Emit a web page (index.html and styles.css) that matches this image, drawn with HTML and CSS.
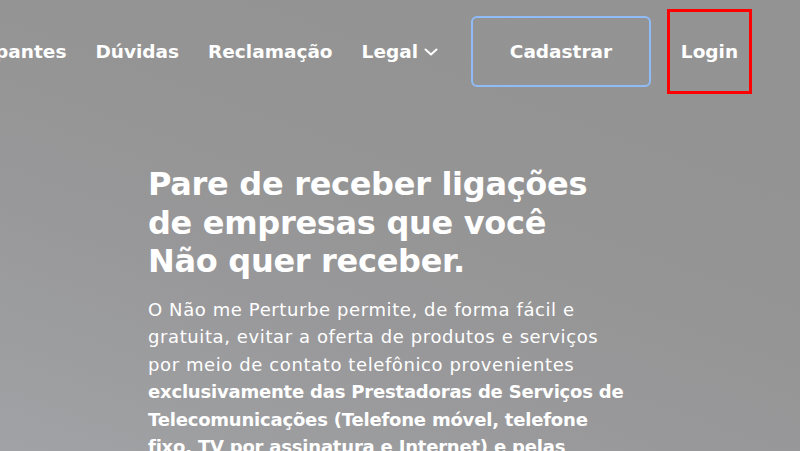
FILE: index.html
```html
<!DOCTYPE html>
<html lang="pt-BR">
<head>
    <meta charset="UTF-8">
    <meta name="viewport" content="width=device-width, initial-scale=1.0">
    <title>Não me Perturbe</title>
    <link rel="stylesheet" href="styles.css">
</head>
<body>
    <div class="page">
        <div class="header">
            <div class="menu">
                <a class="menuItem" href="#">Participantes</a>
                <a class="menuItem" href="#">Dúvidas</a>
                <a class="menuItem" href="#">Reclamação</a>
                <a class="menuItem" href="#">Legal
                    <svg class="chevron" width="14" height="10" viewBox="0 0 14 10"><path d="M1.5 2.5 L7 7.5 L12.5 2.5" fill="none" stroke="#fff" stroke-width="2" stroke-linecap="round" stroke-linejoin="round"/></svg>
                </a>
            </div>
            <a class="btnCadastrar" href="#">Cadastrar</a>
            <a class="btnLogin" href="#">Login</a>
        </div>
        <div class="hero">
            <h1 class="title">Pare de receber ligações<br>de empresas que você<br>Não quer receber.</h1>
            <p class="text">O Não me Perturbe permite, de forma fácil e<br>gratuita, evitar a oferta de produtos e serviços<br>por meio de contato telefônico provenientes<br><b>exclusivamente das Prestadoras de Serviços de<br>Telecomunicações (Telefone móvel, telefone<br>fixo, TV por assinatura e Internet) e pelas</b></p>
        </div>
    </div>
</body>
</html>
```

FILE: styles.css
```css
* {
    margin: 0;
    padding: 0;
    box-sizing: border-box;
    font-family: 'DejaVu Sans', Verdana, sans-serif;
}
html, body {
    height: 100%;
    overflow: hidden;
}
.page {
    height: 100vh;
    background: linear-gradient(20deg, #a1a2a5 0%, #98989a 35%, #949494 60%, #939393 100%);
    color: #fff;
}
.header {
    display: flex;
    justify-content: flex-end;
    align-items: center;
    height: 103px;
    padding-right: 48px;
}
.menu {
    display: flex;
    align-items: center;
    gap: 29px;
    margin-right: 33px;
    white-space: nowrap;
    flex-shrink: 0;
}
.menuItem {
    color: #fff;
    text-decoration: none;
    font-size: 18.5px;
    font-weight: 700;
    display: flex;
    align-items: center;
}
.chevron {
    margin-left: 6px;
}
.btnCadastrar {
    display: flex;
    align-items: center;
    justify-content: center;
    flex-shrink: 0;
    width: 180px;
    height: 71px;
    border: 2px solid #8fbcf7;
    border-radius: 6px;
    color: #fff;
    text-decoration: none;
    font-size: 18.5px;
    font-weight: 700;
    margin-right: 16px;
}
.btnLogin {
    display: flex;
    align-items: center;
    justify-content: center;
    flex-shrink: 0;
    width: 85px;
    height: 85px;
    border: 3px solid #ff0000;
    color: #fff;
    text-decoration: none;
    font-size: 18.5px;
    font-weight: 700;
}
.hero {
    width: 500px;
    margin-left: 148px;
    margin-top: 62px;
}
.title {
    font-size: 32px;
    font-weight: 700;
    line-height: 38.5px;
    letter-spacing: -0.3px;
    margin-bottom: 15px;
    white-space: nowrap;
}
.text {
    font-size: 18px;
    line-height: 27.5px;
    letter-spacing: 0.6px;
    white-space: nowrap;
}
.text b {
    font-weight: 700;
    letter-spacing: -0.2px;
}
```
